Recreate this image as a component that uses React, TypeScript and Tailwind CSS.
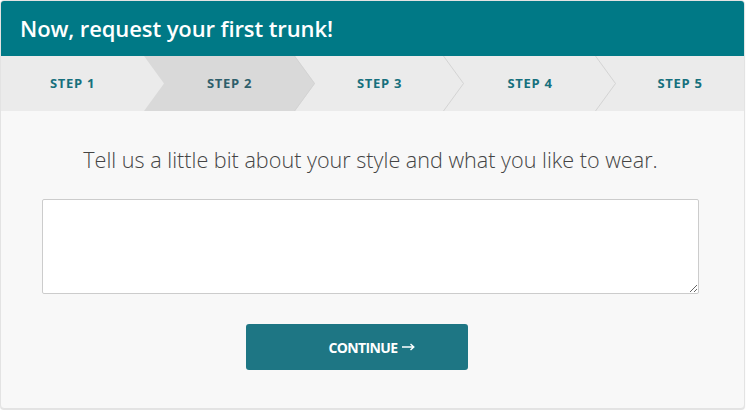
import { useState } from "react";

const steps = [
  { label: "STEP 1", width: "w-[143px]" },
  { label: "STEP 2", width: "w-[151px]" },
  { label: "STEP 3", width: "w-[149px]" },
  { label: "STEP 4", width: "w-[152px]" },
  { label: "STEP 5", width: "w-[148px]" },
];
const active = 1;

function Chevron() {
  return (
    <svg
      className="pointer-events-none absolute top-0 -right-[20px] z-20 h-[55px] w-[21px]"
      viewBox="0 0 21 55"
      fill="none"
    >
      <path d="M0.5 0 L20.5 27.5 L0.5 55" stroke="#d3d3d3" strokeWidth="1" />
    </svg>
  );
}

export default function App() {
  const [style, setStyle] = useState("");

  return (
    <div className="h-[410px] w-[746px] bg-white font-['Open_Sans',sans-serif]">
      <div className="flex h-[409px] w-[745px] flex-col overflow-hidden rounded-[4px] border border-[#e3e3e3] bg-[#f8f8f8] shadow-[0_1px_1px_rgba(0,0,0,0.12)]">
        <div className="flex h-[55px] shrink-0 items-center bg-[#007986] px-[19px]">
          <h1 className="text-[22px] font-semibold tracking-[-0.1px] text-white">
            Now, request your first trunk!
          </h1>
        </div>

        <div className="flex h-[55px] shrink-0 bg-[#ebebeb]">
          {steps.map((step, i) => (
            <div
              key={step.label}
              className={`relative flex h-full shrink-0 items-center justify-center ${step.width} ${
                i > 0 ? "pl-[20px]" : ""
              }`}
            >
              {i === active && (
                <div className="absolute inset-y-0 left-0 -right-[20px] z-10 bg-[#d9d9d9] [clip-path:polygon(0_0,calc(100%-20px)_0,100%_50%,calc(100%-20px)_100%,0_100%,20px_50%)]" />
              )}
              {i < steps.length - 1 && i !== active - 1 && <Chevron />}
              <span
                className={`relative z-30 text-[13px] font-bold tracking-[0.7px] ${
                  i === active ? "text-[#2f5f6b]" : "text-[#17707d]"
                }`}
              >
                {step.label}
              </span>
            </div>
          ))}
        </div>

        <div className="flex flex-1 flex-col pl-[41px] pr-[45px] pt-[32px]">
          <p className="text-center text-[21.6px] font-light leading-[34px] text-[#444]">
            Tell us a little bit about your style and what you like to wear.
          </p>
          <textarea
            value={style}
            onChange={(event) => setStyle(event.target.value)}
            className="mt-[22px] h-[95px] w-full rounded-[2px] border border-[#cccccc] bg-white px-3 py-2 text-sm text-[#333] outline-none"
          />
          <button
            type="button"
            className="ml-[204px] mt-[30px] flex h-[46px] w-[222px] items-center justify-center gap-[4px] self-start rounded-[3px] bg-[#1e7684] pl-[29px] text-[14px] font-bold tracking-[-0.6px] text-white"
          >
            CONTINUE
            <svg className="h-[8px] w-[13px]" viewBox="0 0 13 8" fill="none">
              <path d="M0 4 H11.5 M8.5 1 L11.8 4 L8.5 7" stroke="white" strokeWidth="1.4" />
            </svg>
          </button>
        </div>
      </div>
    </div>
  );
}
